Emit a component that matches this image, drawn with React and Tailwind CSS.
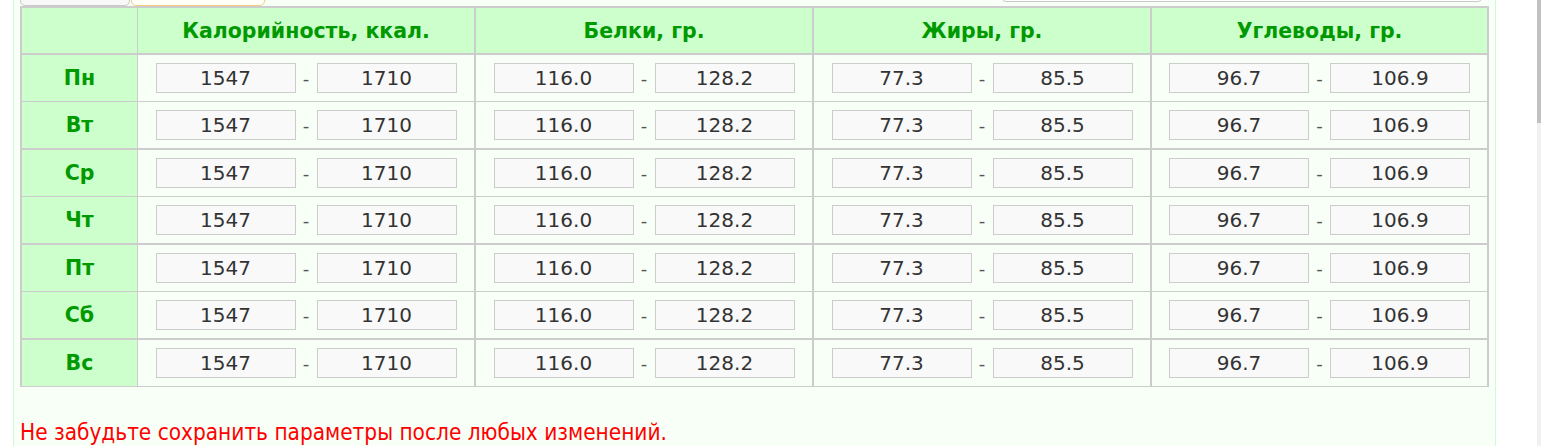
import React from 'react'

const days = ['Пн', 'Вт', 'Ср', 'Чт', 'Пт', 'Сб', 'Вс']

const headers = ['Калорийность, ккал.', 'Белки, гр.', 'Жиры, гр.', 'Углеводы, гр.']

const ranges = [
  ['1547', '1710'],
  ['116.0', '128.2'],
  ['77.3', '85.5'],
  ['96.7', '106.9'],
]

// widths of each column incl. its right border
const colW = ['w-[116px] border-r', 'w-[338px] border-r-2', 'w-[338px] border-r-2', 'w-[338px] border-r-2', 'w-[337px] border-r-2']

const font = { fontFamily: '"DejaVu Sans", Verdana, sans-serif' }

function RangeCell({ min, max, cls }) {
  return (
    <div className={`${cls} border-[#cccccc] bg-[#f7fff7] flex items-center justify-center`}>
      <input
        readOnly
        value={min}
        className="w-[140px] h-[30px] border border-[#cccccc] bg-[#f9f9f9] text-center text-[20px] text-[#333333] outline-none"
      />
      <span className="w-[21px] text-center text-[18px] text-[#555555]">-</span>
      <input
        readOnly
        value={max}
        className="w-[140px] h-[30px] border border-[#cccccc] bg-[#f9f9f9] text-center text-[20px] text-[#333333] outline-none"
      />
    </div>
  )
}

export default function App() {
  return (
    <div className="flex w-[1541px] h-[446px] overflow-hidden bg-white" style={font}>
      <div className="w-[1537px] pl-[13px]">
        <div className="w-[1483px] h-[446px] border-x border-[#d4f7d4] bg-[#f7fff7] pl-[6px]">
          {/* cropped tabs above the table */}
          <div className="relative flex h-[6px] overflow-hidden">
            <div className="w-[110px] h-[12px] -mt-[6px] border border-[#c8c8c8] bg-[#f8f8f8] rounded-b-[5px]" />
            <div className="ml-[1px] w-[134px] h-[12px] -mt-[6px] border border-[#f3cf7f] bg-[#fffef8] rounded-b-[5px]" />
            <div className="ml-[737px] w-[480px] h-[8px] -mt-[6px] border border-[#c8c8c8] bg-white rounded-b-[4px]" />
          </div>

          <div className="w-[1469px] border-l-2 border-t-2 border-[#cccccc]">
            {/* header */}
            <div className="flex h-[47px] border-b-2 border-[#cccccc]">
              <div className={`${colW[0]} border-[#cccccc] bg-[#ccffcc]`} />
              {headers.map((h, i) => (
                <div
                  key={h}
                  className={`${colW[i + 1]} border-[#cccccc] bg-[#ccffcc] flex items-center justify-center pt-[2px] text-[20.5px] font-bold text-[#009900]`}
                >
                  {h}
                </div>
              ))}
            </div>

            {days.map((d, r) => (
              <div
                key={d}
                className={`flex ${r % 2 === 0 ? 'h-[47px] border-b' : 'h-[48px] border-b-2'} border-[#cccccc]`}
              >
                <div className={`${colW[0]} border-[#cccccc] bg-[#ccffcc] flex items-center justify-center text-[20.5px] font-bold text-[#009900]`}>
                  {d}
                </div>
                {ranges.map((v, i) => (
                  <RangeCell key={i} min={v[0]} max={v[1]} cls={colW[i + 1]} />
                ))}
              </div>
            ))}
          </div>

          <p
            className="mt-[29px] text-[22.4px] text-[#ff0000]"
            style={{ fontFamily: '"DejaVu Sans Condensed", "DejaVu Sans", sans-serif', fontStretch: 'condensed' }}
          >
            Не забудьте сохранить параметры после любых изменений.
          </p>
        </div>
      </div>
      {/* scrollbar */}
      <div className="w-[4px] h-[446px] bg-[#f1f1f1]">
        <div className="w-[4px] h-[123px] bg-[#c1c1c1]" />
      </div>
    </div>
  )
}
